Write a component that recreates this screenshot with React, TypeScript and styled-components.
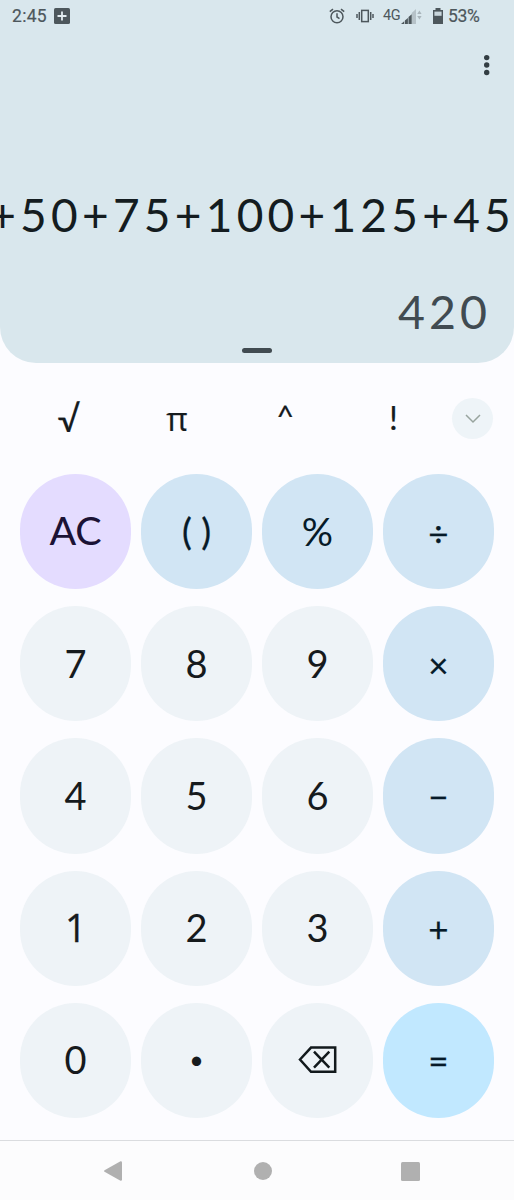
import React from "react";
import styled, { createGlobalStyle } from "styled-components";

const GlobalStyle = createGlobalStyle`
  * { box-sizing: border-box; }
  body { margin: 0; background: #fcfcff; overflow: hidden; }
  button { border: 0; padding: 0; margin: 0; background: none; color: inherit; }
  svg { display: block; flex: none; }
`;

const Screen = styled.main`
  display: flex;
  flex-direction: column;
  width: 514px;
  height: 1200px;
  overflow: hidden;
  background: #fcfcff;
  color: #161b1e;
  font-family: Lato, sans-serif;
`;

const Display = styled.section`
  display: flex;
  flex-direction: column;
  height: 363px;
  flex: none;
  border-radius: 0 0 36px 36px;
  background: #d9e7ed;
  overflow: hidden;
`;

const StatusBar = styled.header`
  display: flex;
  align-items: center;
  height: 32px;
  padding: 0 33px 0 12px;
  color: #4d575c;
  font: 400 17.5px/32px Roboto, sans-serif;
  -webkit-text-stroke: 0.2px currentColor;
`;

const Clock = styled.span`
  width: 42px;
  letter-spacing: 0.3px;
`;

const StatusIcons = styled.div`
  display: flex;
  align-items: center;
  margin-left: auto;
`;

const VibrateSlot = styled.div`
  margin-left: 11px;
`;

const BatterySlot = styled.div`
  margin-left: 11px;
`;

const Network = styled.span`
  margin-left: 9px;
  width: 18px;
  font-size: 14.5px;
  letter-spacing: -0.5px;
  -webkit-text-stroke: 0;
`;

const BatteryLevel = styled.span`
  width: 33px;
  margin-left: 5px;
  font-size: 17.5px;
  letter-spacing: -0.3px;
  white-space: nowrap;
`;

const MenuRow = styled.div`
  display: flex;
  justify-content: flex-end;
  padding: 21px 23px 0 0;
  height: 151px;
`;

const Expression = styled.div`
  display: flex;
  justify-content: flex-end;
  height: 64px;
  font-size: 46px;
  line-height: 64px;
  letter-spacing: 4.25px;
  margin-right: -1px;
  white-space: nowrap;
  color: #141c20;
`;

const Result = styled.div`
  display: flex;
  justify-content: flex-end;
  margin-top: 32px;
  height: 64px;
  padding-right: 23px;
  font-size: 46.5px;
  line-height: 64px;
  letter-spacing: 4px;
  color: #414b51;
`;

const Handle = styled.div`
  width: 30px;
  height: 5px;
  margin: 5px auto 0 242px;
  border-radius: 2.5px;
  background: #414b51;
`;

const FunctionRow = styled.nav`
  display: grid;
  grid-template-columns: repeat(4, 108.2px) 41px;
  align-items: center;
  height: 111px;
  padding-left: 14px;
  flex: none;
`;

const FunctionKey = styled.button<{ $size: number; $shift?: number; $face?: string }>`
  height: 60px;
  font-family: ${(p) => p.$face ?? "Lato"}, sans-serif;
  font-size: ${(p) => p.$size}px;
  line-height: 60px;
  -webkit-text-stroke: 0.2px currentColor;
  transform: translate(0.7px, ${(p) => p.$shift ?? 0}px);
`;

const ExpandKey = styled.button`
  display: grid;
  place-items: center;
  width: 41px;
  height: 41px;
  margin-left: 5.5px;
  border-radius: 50%;
  background: #eef4f8;
`;

const Keypad = styled.section`
  display: grid;
  grid-template-columns: repeat(4, 110.5px);
  grid-auto-rows: 115.3px;
  column-gap: 10.4px;
  row-gap: 16.9px;
  padding-left: 20.4px;
  height: 666px;
  flex: none;
`;

type Tone = "digit" | "operator" | "clear" | "equals";

const tones: Record<Tone, { fill: string; ink: string }> = {
  digit: { fill: "#eef3f7", ink: "#161a1d" },
  operator: { fill: "#d1e5f4", ink: "#061a28" },
  clear: { fill: "#e4dcff", ink: "#1b1235" },
  equals: { fill: "#c1e8ff", ink: "#061a28" },
};

const Key = styled.button<{ $tone: Tone }>`
  display: grid;
  place-items: center;
  border-radius: 56px;
  background: ${(p) => tones[p.$tone].fill};
  color: ${(p) => tones[p.$tone].ink};
`;

const Label = styled.span<{
  $size: number;
  $shift: number;
  $face: string;
  $spacing: number;
  $stroke: number;
}>`
  font-family: ${(p) => p.$face}, sans-serif;
  font-size: ${(p) => p.$size}px;
  line-height: 50px;
  letter-spacing: ${(p) => p.$spacing}px;
  margin-right: ${(p) => -p.$spacing}px;
  -webkit-text-stroke: ${(p) => p.$stroke}px currentColor;
  transform: translateY(${(p) => p.$shift}px);
`;

const NavBar = styled.footer`
  display: grid;
  grid-template-columns: 225px 75px 221px;
  align-items: center;
  justify-items: center;
  height: 60px;
  padding-top: 1px;
  flex: none;
  border-top: 1.5px solid #dadcdf;
  background: #fcfcfd;
`;

interface KeySpec {
  text: string;
  tone: Tone;
  size?: number;
  shift?: number;
  face?: string;
  spacing?: number;
  stroke?: number;
}

const digit = (text: string): KeySpec => ({ text, tone: "digit" });
const op = (text: string): KeySpec => ({ text, tone: "operator", size: 35, shift: 0.4, stroke: 0.25 });

const keys: KeySpec[] = [
  { text: "AC", tone: "clear", size: 39.5, spacing: -0.3, shift: -2 },
  { text: "()", tone: "operator", size: 37, spacing: 9.5, shift: -1.5, stroke: 0.3 },
  { text: "%", tone: "operator", size: 39, shift: -1 },
  op("÷"),
  digit("7"), digit("8"), digit("9"), op("×"),
  digit("4"), digit("5"), digit("6"), op("−"),
  { text: "1", tone: "digit", face: "Open Sans", size: 37.5, shift: -0.5, stroke: 0.3 },
  digit("2"), digit("3"), op("+"),
  digit("0"),
  { text: "•", tone: "digit", size: 25, shift: -1.5 },
  { text: "delete", tone: "digit" },
  { text: "=", tone: "equals", size: 35, shift: 0, stroke: 0.25 },
];

const AddBadge = () => (
  <svg width="16" height="16" viewBox="0 0 16 16">
    <rect width="16" height="16" rx="1.6" fill="#4d575c" />
    <path d="M8 3.5v9M3.5 8h9" stroke="#e3edf1" strokeWidth="1.8" />
  </svg>
);

const Alarm = () => (
  <svg width="16" height="16" viewBox="0 0 16 16" fill="none" stroke="#4d575c" strokeWidth="1.5">
    <circle cx="8" cy="8.7" r="6" />
    <path d="M8 5.3v3.7l2.5 1.6M.8 3.7 4 1.1M15.2 3.7 12 1.1" />
  </svg>
);

const Vibrate = () => (
  <svg width="18" height="14" viewBox="0 0 18 14" fill="none" stroke="#4d575c" strokeWidth="1.5">
    <rect x="5.7" y="1.4" width="6.6" height="11.2" />
    <path d="M3.3 3v8M14.7 3v8M1 5v4M17 5v4" />
  </svg>
);

const Signal = () => (
  <svg width="21" height="15" viewBox="0 0 21 15">
    <path d="M10.7 4 15 0v15h-4.3z" fill="#b6c2c8" />
    <path d="M0 15 3.2 12.2V15zM3.9 11.5 6.9 9v6h-3zM7.5 8.1l3.2-2.9V15H7.5z" fill="#4d575c" />
    <path d="M16.2 5 18.4 1.6 20.6 5zM16.2 7l2.2 3.4L20.6 7z" fill="#a9b5bb" />
  </svg>
);

const BatteryIcon = () => (
  <svg width="10" height="16" viewBox="0 0 10 16">
    <path d="M2.5 0h5v2H10v14H0V2h2.5z" fill="#4d575c" />
    <path d="M1.4 3.6h7.2v4.2H1.4z" fill="#c9d6dc" />
  </svg>
);

const Dots = () => (
  <svg width="8" height="24" viewBox="0 0 8 24" fill="#333e43">
    <circle cx="3.7" cy="4.6" r="2.7" />
    <circle cx="3.7" cy="12" r="2.7" />
    <circle cx="3.7" cy="19.5" r="2.7" />
  </svg>
);

const Delete = () => (
  <svg width="40" height="28" viewBox="0 0 40 28" fill="none" stroke="#12191c" strokeWidth="2.5">
    <path d="M3 13.5 14 1.6h24.2v24.2H14z" />
    <path d="m17 5.7 15.3 16M32.3 5.7 17 21.7" />
  </svg>
);

export default function App() {
  return (
    <>
      <GlobalStyle />
      <Screen>
        <Display>
          <StatusBar>
            <Clock>2:45</Clock>
            <AddBadge />
            <StatusIcons>
              <Alarm />
              <VibrateSlot><Vibrate /></VibrateSlot>
              <Network>4G</Network>
              <Signal />
              <BatterySlot><BatteryIcon /></BatterySlot>
              <BatteryLevel>53%</BatteryLevel>
            </StatusIcons>
          </StatusBar>
          <MenuRow><Dots /></MenuRow>
          <Expression>+50+75+100+125+45</Expression>
          <Result>420</Result>
          <Handle />
        </Display>
        <FunctionRow>
          <FunctionKey $size={36} $shift={-1}>√</FunctionKey>
          <FunctionKey $size={33} $face="Open Sans" $shift={-0.5}>π</FunctionKey>
          <FunctionKey $size={31} $shift={-3}>^</FunctionKey>
          <FunctionKey $size={33} $shift={-2}>!</FunctionKey>
          <ExpandKey>
            <svg width="16" height="10" viewBox="0 0 16 10" fill="none" stroke="#98a49e" strokeWidth="1.5">
              <path d="m1 1 7 7 7-7" />
            </svg>
          </ExpandKey>
        </FunctionRow>
        <Keypad>
          {keys.map((k) => (
            <Key key={k.text} $tone={k.tone}>
              {k.text === "delete" ? <Delete /> : (
                <Label
                  $size={k.size ?? 38}
                  $shift={k.shift ?? -1}
                  $face={k.face ?? "Lato"}
                  $spacing={k.spacing ?? 0}
                  $stroke={k.stroke ?? 0}
                >
                  {k.text}
                </Label>
              )}
            </Key>
          ))}
        </Keypad>
        <NavBar>
          <svg width="18" height="20" viewBox="0 0 18 20" fill="#b0b0b0">
            <path d="M.5 9.2 16.5.2Q18 0 18 1.5v17Q18 20 16.5 19.8L.5 10.8Q-.3 10 .5 9.2z" />
          </svg>
          <svg width="18" height="18" viewBox="0 0 18 18" fill="#b0b0b0"><circle cx="9" cy="9" r="9" /></svg>
          <svg width="19" height="19" viewBox="0 0 19 19" fill="#b0b0b0"><rect width="19" height="19" rx="1.5" /></svg>
        </NavBar>
      </Screen>
    </>
  );
}
